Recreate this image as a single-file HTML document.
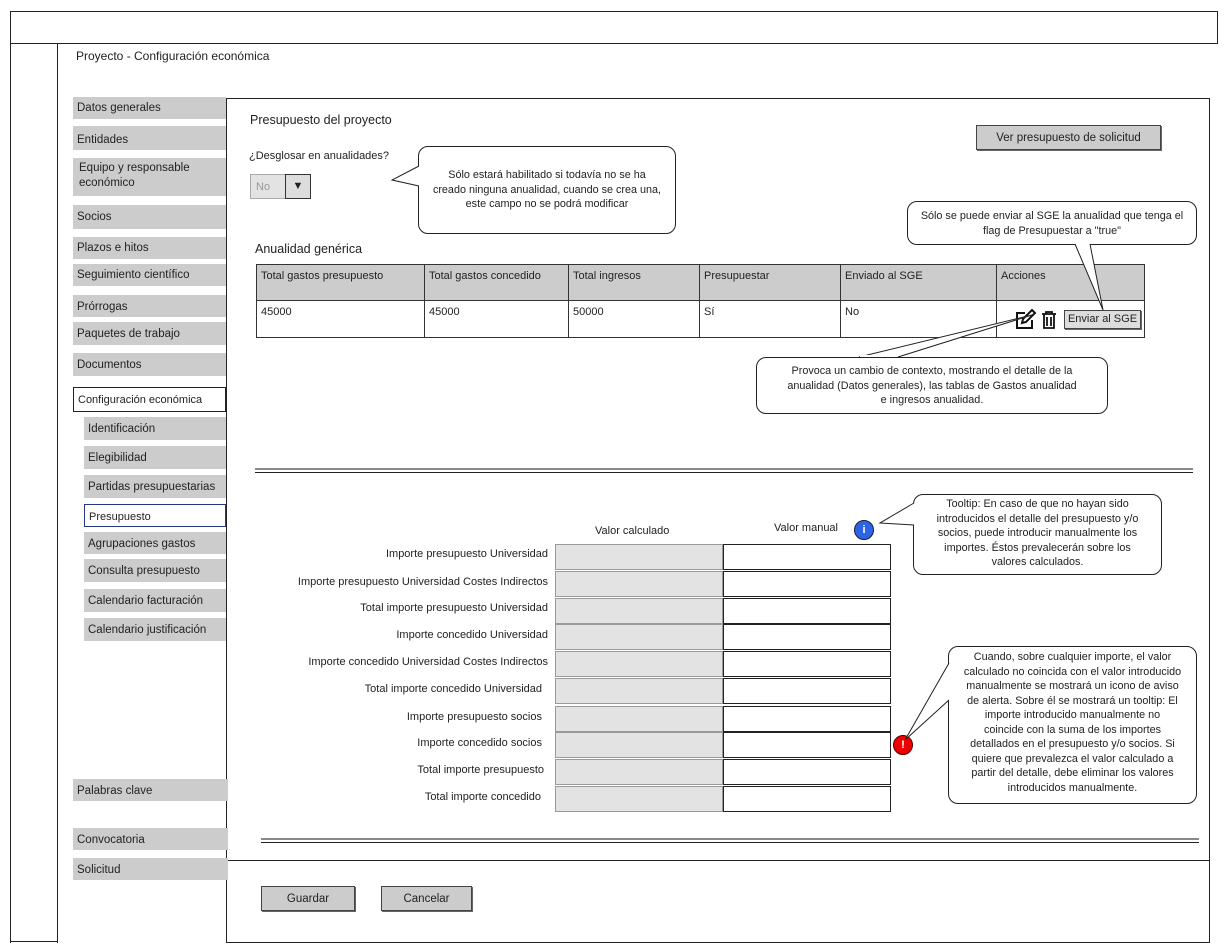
<!DOCTYPE html>
<html><head><meta charset="utf-8"><style>
*{box-sizing:border-box;margin:0;padding:0}
body{width:1230px;height:950px;background:#fff;position:relative;overflow:hidden;font-family:"Liberation Sans",sans-serif;font-size:11.5px;color:#222}
.a{position:absolute}
.nav{position:absolute;background:#ccc;padding:5px 4px;font-size:11.5px;line-height:15px}
.btn{position:absolute;background:#ccc;border:1px solid #444;text-align:center;font-size:11.5px;box-shadow:1px 1px 0 #666}
.tip{position:absolute;background:#fff;border:1px solid #222;border-radius:10px;text-align:center;font-size:10.8px;line-height:14.5px;padding:3px 2px;white-space:nowrap}
.lab{position:absolute;right:682px;font-size:11px;text-align:right}
.calc{position:absolute;left:555px;width:168px;background:#e3e3e3;border:1px solid #999}
.man{position:absolute;left:723px;width:168px;background:#fff;border:1.5px solid #222}
th,td{border:1px solid #333;text-align:left;vertical-align:top;font-weight:normal;padding:5px 4px;font-size:11px}
</style></head><body>
<div class="a" style="left:10px;top:11px;width:1208px;height:33px;border:1px solid #222"></div>
<div class="a" style="left:10px;top:43px;width:1px;height:900px;background:#222"></div>
<div class="a" style="left:57px;top:43px;width:1px;height:900px;background:#222"></div>
<div class="a" style="left:10px;top:941px;width:48px;height:1px;background:#222"></div>
<div class="a" style="left:76px;top:49px;font-size:12px">Proyecto - Configuración económica</div>

<div class="a" style="left:226px;top:98px;width:984px;height:845px;border:1px solid #222"></div>
<div class="a" style="left:226px;top:860px;width:984px;height:1px;background:#222"></div>

<div class="nav" style="left:73px;top:97px;width:153px;height:22px;padding-top:4px">Datos generales</div>
<div class="nav" style="left:73px;top:126px;width:153px;height:24px;padding-top:7px">Entidades</div>
<div class="nav" style="left:73px;top:158px;width:153px;height:38px;padding-left:6px;padding-top:3px">Equipo y responsable económico</div>
<div class="nav" style="left:73px;top:205px;width:153px;height:24px">Socios</div>
<div class="nav" style="left:73px;top:237px;width:153px;height:22px;padding-top:4px">Plazos e hitos</div>
<div class="nav" style="left:73px;top:264px;width:153px;height:22px;padding-top:4px">Seguimiento científico</div>
<div class="nav" style="left:73px;top:295px;width:153px;height:22px">Prórrogas</div>
<div class="nav" style="left:73px;top:322px;width:153px;height:23px">Paquetes de trabajo</div>
<div class="nav" style="left:73px;top:353px;width:153px;height:23px">Documentos</div>
<div class="nav" style="left:73px;top:387px;width:153px;height:25px;background:#fff;border:1px solid #222;padding-top:5px;font-size:11px">Configuración económica</div>
<div class="nav" style="left:84px;top:417px;width:142px;height:23px">Identificación</div>
<div class="nav" style="left:84px;top:446px;width:142px;height:23px">Elegibilidad</div>
<div class="nav" style="left:84px;top:475px;width:142px;height:23px">Partidas presupuestarias</div>
<div class="nav" style="left:84px;top:504px;width:142px;height:23px;background:#fff;border:1px solid #23388a;font-size:11px">Presupuesto</div>
<div class="nav" style="left:84px;top:532px;width:142px;height:22px">Agrupaciones gastos</div>
<div class="nav" style="left:84px;top:559px;width:142px;height:23px">Consulta presupuesto</div>
<div class="nav" style="left:84px;top:589px;width:142px;height:23px">Calendario facturación</div>
<div class="nav" style="left:84px;top:618px;width:142px;height:23px">Calendario justificación</div>
<div class="nav" style="left:73px;top:779px;width:155px;height:22px">Palabras clave</div>
<div class="nav" style="left:73px;top:828px;width:155px;height:22px">Convocatoria</div>
<div class="nav" style="left:73px;top:858px;width:155px;height:22px">Solicitud</div>

<div class="a" style="left:250px;top:113px;font-size:12.5px">Presupuesto del proyecto</div>
<div class="a" style="left:249px;top:150px;font-size:11px">¿Desglosar en anualidades?</div>
<div class="a" style="left:250px;top:174px;width:36px;height:25px;background:#e3e3e3;border:1px solid #aaa;color:#999;padding:6px 5px;font-size:11px">No</div>
<div class="a" style="left:285px;top:174px;width:26px;height:25px;border:1.5px solid #333;background:#ddd;text-align:center;line-height:22px;font-size:11px">▼</div>

<div class="btn" style="left:976px;top:125px;width:185px;height:25px;line-height:24px">Ver presupuesto de solicitud</div>

<div class="a" style="left:255px;top:242px;font-size:12.5px">Anualidad genérica</div>
<table class="a" style="left:256px;top:264px;width:889px;border-collapse:collapse">
<tr style="background:#ccc;height:36px"><th style="width:168px">Total gastos presupuesto</th><th style="width:144px">Total gastos concedido</th><th style="width:131px">Total ingresos</th><th style="width:141px">Presupuestar</th><th style="width:156px">Enviado al SGE</th><th>Acciones</th></tr>
<tr style="height:37px"><td>45000</td><td>45000</td><td>50000</td><td>Sí</td><td>No</td><td></td></tr>
</table>
<svg class="a" style="left:1014px;top:309px" width="50" height="22" viewBox="0 0 50 22">
<path d="M11 4H3v15h15v-8" fill="none" stroke="#111" stroke-width="2"/><path d="M8 14l1-4 9-9 3 3-9 9z" fill="none" stroke="#111" stroke-width="2"/>
<path d="M28 5h14M32 5V3h6v2M30 5v14h10V5M33 8v9M37 8v9" fill="none" stroke="#111" stroke-width="1.8"/></svg>
<div class="btn" style="left:1064px;top:310px;width:77px;height:19px;line-height:17px;font-size:11px;background:#ddd">Enviar al SGE</div>

<div class="a" style="left:255px;top:468px;width:938px;height:5px;border-top:2px solid #888;border-bottom:1.5px solid #222"></div>
<div class="a" style="left:261px;top:838px;width:938px;height:5px;border-top:2px solid #888;border-bottom:1.5px solid #222"></div>

<div class="a" style="left:595px;top:525px;font-size:11px">Valor calculado</div>
<div class="a" style="left:774px;top:522px;font-size:11px">Valor manual</div>
<div class="a" style="left:854px;top:520px;width:20px;height:20px;border-radius:50%;background:#2f63e6;border:1px solid #123;color:#fff;text-align:center;font-size:11px;line-height:18px;font-weight:bold">i</div>
<div class="a" style="left:893px;top:735px;width:20px;height:20px;border-radius:50%;background:#e00;border:1px solid #500;color:#fff;text-align:center;font-size:11px;line-height:18px;font-weight:bold">!</div>

<div class="lab" style="top:548px">Importe presupuesto Universidad</div><div class="calc" style="top:544px;height:26px"></div><div class="man" style="top:544px;height:26px"></div>
<div class="lab" style="top:576px">Importe presupuesto Universidad Costes Indirectos</div><div class="calc" style="top:571px;height:26px"></div><div class="man" style="top:571px;height:26px"></div>
<div class="lab" style="top:602px">Total importe presupuesto Universidad</div><div class="calc" style="top:598px;height:26px"></div><div class="man" style="top:598px;height:26px"></div>
<div class="lab" style="top:629px">Importe concedido Universidad</div><div class="calc" style="top:624px;height:26px"></div><div class="man" style="top:624px;height:26px"></div>
<div class="lab" style="top:656px">Importe concedido Universidad Costes Indirectos</div><div class="calc" style="top:651px;height:26px"></div><div class="man" style="top:651px;height:26px"></div>
<div class="lab" style="top:683px;right:688px">Total importe concedido Universidad</div><div class="calc" style="top:678px;height:26px"></div><div class="man" style="top:678px;height:26px"></div>
<div class="lab" style="top:711px;right:688px">Importe presupuesto socios</div><div class="calc" style="top:706px;height:26px"></div><div class="man" style="top:706px;height:26px"></div>
<div class="lab" style="top:737px;right:688px">Importe concedido socios</div><div class="calc" style="top:732px;height:26px"></div><div class="man" style="top:732px;height:26px"></div>
<div class="lab" style="top:764px;right:686px">Total importe presupuesto</div><div class="calc" style="top:759px;height:26px"></div><div class="man" style="top:759px;height:26px"></div>
<div class="lab" style="top:791px;right:689px">Total importe concedido</div><div class="calc" style="top:786px;height:26px"></div><div class="man" style="top:786px;height:26px"></div>

<div class="btn" style="left:261px;top:886px;width:94px;height:25px;line-height:25px">Guardar</div>
<div class="btn" style="left:381px;top:886px;width:91px;height:25px;line-height:25px">Cancelar</div>

<div class="tip" style="left:418px;top:146px;width:258px;height:88px;padding-top:21px">Sólo estará habilitado si todavía no se ha<br>creado ninguna anualidad, cuando se crea una,<br>este campo no se podrá modificar</div>
<div class="tip" style="left:907px;top:201px;width:290px;height:44px;padding-top:7px">Sólo se puede enviar al SGE la anualidad que tenga el<br>flag de Presupuestar a "true"</div>
<div class="tip" style="left:756px;top:357px;width:352px;height:57px;padding-top:6px">Provoca un cambio de contexto, mostrando el detalle de la<br>anualidad (Datos generales), las tablas de Gastos anualidad<br>e ingresos anualidad.</div>
<div class="tip" style="left:913px;top:494px;width:249px;height:81px;padding-top:2px">Tooltip: En caso de que no hayan sido<br>introducidos el detalle del presupuesto y/o<br>socios, puede introducir manualmente los<br>importes. Éstos prevalecerán sobre los<br>valores calculados.</div>
<div class="tip" style="left:948px;top:646px;width:249px;height:158px;padding-top:3px">Cuando, sobre cualquier importe, el valor<br>calculado no coincida con el valor introducido<br>manualmente se mostrará un icono de aviso<br>de alerta. Sobre él se mostrará un tooltip: El<br>importe introducido manualmente no<br>coincide con la suma de los importes<br>detallados en el presupuesto y/o socios. Si<br>quiere que prevalezca el valor calculado a<br>partir del detalle, debe eliminar los valores<br>introducidos manualmente.</div>

<svg class="a" style="left:0;top:0" width="1230" height="950">
<g fill="#fff" stroke="#222" stroke-width="1">
<path d="M419 166 L392 180 L419 186"/>
<path d="M1075 244 L1103 310 L1090 244"/>
<path d="M859 357 L1032 315 L898 357"/>
<path d="M914 503 L880 523 L914 525"/>
<path d="M949 663 L905 740 L949 700"/>
</g>
<g stroke="#fff" stroke-width="2"><path d="M420 168 L420 185"/><path d="M1076 244 L1089 244"/><path d="M860 356 L897 356"/><path d="M915 504 L915 524"/><path d="M950 665 L950 698"/></g>
</svg>
</body></html>
